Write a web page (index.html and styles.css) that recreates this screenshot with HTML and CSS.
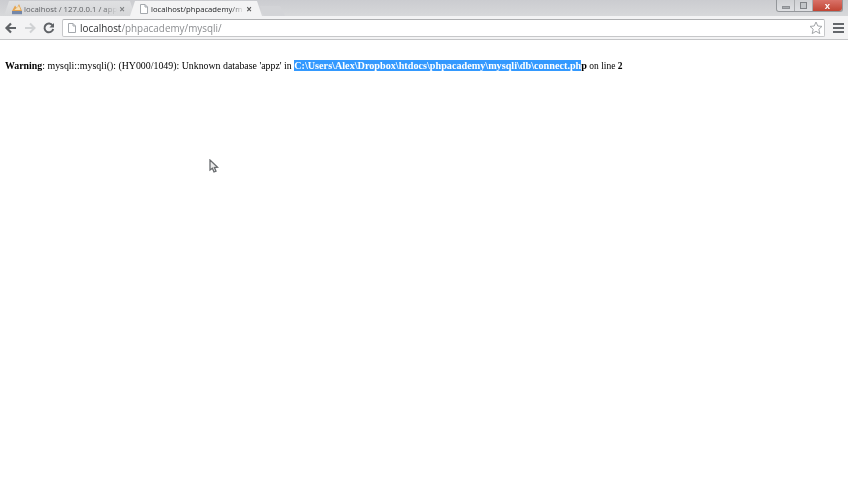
FILE: index.html
```html
<!DOCTYPE html>
<html lang="en">
<head>
<meta charset="utf-8">
<title>localhost/phpacademy/mysqli/</title>
<link rel="stylesheet" href="styles.css">
</head>
<body>
<header class="chrome">
  <div class="tabstrip">
    <div class="tab tab-back">
      <svg class="favicon" viewBox="0 0 12 12" width="12" height="12"><path d="M1 8 L4 2.5 L6 5 L8 1 L11 8 Z" fill="#e6a550"/><path d="M3.4 7 L5.6 5 L8 3 L9.6 7 Z" fill="#f5e0b8"/><rect x="1" y="8" width="10" height="3.2" fill="#7487a8"/></svg>
      <span class="tab-title">localhost / 127.0.0.1 / app</span>
      <span class="tab-close">×</span>
    </div>
    <div class="tab tab-front">
      <svg class="page-icon" viewBox="0 0 8 10" width="8" height="10"><path d="M.5 .5 H5 L7.5 3 V9.5 H.5 Z M5 .5 V3 H7.5" fill="#fff" stroke="#a4a8ad"/></svg>
      <span class="tab-title">localhost/phpacademy/m</span>
      <span class="tab-close">×</span>
    </div>
    <div class="tab-new"></div>
    <div class="window-controls">
      <span class="wc wc-min"><i></i></span>
      <span class="wc wc-max"><i></i></span>
      <span class="wc wc-close">x</span>
    </div>
  </div>
  <div class="toolbar">
    <svg class="nav" viewBox="0 0 14 14" width="14" height="14"><path d="M12 7 H3 M7 2.5 L2.5 7 L7 11.5" fill="none" stroke="#5f6266" stroke-width="2.2"/></svg>
    <svg class="nav" viewBox="0 0 14 14" width="14" height="14"><path d="M2 7 H11 M7 2.5 L11.5 7 L7 11.5" fill="none" stroke="#d0d2d4" stroke-width="2"/></svg>
    <svg class="nav" viewBox="0 0 14 14" width="14" height="14"><path d="M10.6 4.5 A4.4 4.4 0 1 0 11.2 8" fill="none" stroke="#5f6266" stroke-width="2"/><path d="M12 2 V6.6 H7.4 Z" fill="#5f6266"/></svg>
    <div class="omnibox">
      <svg class="page-icon" viewBox="0 0 8 10" width="8" height="10"><path d="M.5 .5 H5 L7.5 3 V9.5 H.5 Z M5 .5 V3 H7.5" fill="#fff" stroke="#a4a8ad"/></svg>
      <span class="url"><span class="host">localhost</span>/phpacademy/mysqli/</span>
      <svg class="star" viewBox="0 0 14 14" width="14" height="14"><path d="M7 1 L8.8 5 L13 5.4 L9.8 8.2 L10.8 12.6 L7 10.3 L3.2 12.6 L4.2 8.2 L1 5.4 L5.2 5 Z" fill="#fff" stroke="#a3a6a9"/></svg>
    </div>
    <div class="menu"><i></i><i></i><i></i></div>
  </div>
</header>
<main class="page">
  <p class="warning"><b>Warning</b>: mysqli::mysqli(): (HY000/1049): Unknown database 'appz' in <b class="path"><span class="selected">C:\Users\Alex\Dropbox\htdocs\phpacademy\mysqli\db\connect.ph</span>p</b><span class="tail"> on line <b>2</b></span></p>
  <svg class="cursor" viewBox="0 0 10 15" width="10" height="15"><path d="M1 1 L1 11 L3.4 9.2 L5 13 L7 12.2 L5.4 8.6 L8.6 8.2 Z" fill="#ececec" stroke="#6a6d70" stroke-width="1.3"/></svg>
</main>
</body>
</html>
```
FILE: styles.css
```css
* { box-sizing: border-box; }
html, body { margin: 0; height: 100%; background: #fff; overflow: hidden; }
body { font-family: "Open Sans", "Liberation Sans", Arial, sans-serif; }

.chrome { height: 40px; background: #f3f3f4; border-bottom: 1px solid #c4c5c7; filter: blur(.25px); }

.tabstrip {
  height: 16px;
  display: flex;
  align-items: flex-end;
  background: linear-gradient(#cbccd0, #d7d8da);
  padding-left: 4px;
  position: relative;
}
.tab {
  height: 15px;
  display: flex;
  align-items: center;
  clip-path: polygon(0 100%, 5px 0, calc(100% - 5px) 0, 100% 100%);
}
.tab-back { width: 131px; padding: 0 10px 0 7px; background: linear-gradient(#dfe0e2, #d6d7d9); color: #5f6164; font-size: 7.8px; }
.tab-front { width: 132px; margin-left: -5px; padding: 0 10px 0 10px; background: #f3f3f4; color: #232527; font-size: 7.7px; z-index: 1; }
.tab-title {
  flex: 1;
  margin-left: 1px;
  overflow: hidden;
  white-space: nowrap;
  -webkit-mask-image: linear-gradient(90deg, #000 85%, transparent 100%);
  mask-image: linear-gradient(90deg, #000 85%, transparent 100%);
}
.tab-front .tab-title { margin-left: 3px; }
.tab-close { width: 6px; font-size: 10px; font-weight: 700; color: #7e8083; line-height: 1; text-align: center; margin-left: 2px; }
.tab-front .tab-close { color: #555; }
.tab-new {
  width: 25px; height: 10px; margin-left: -2px;
  background: #d3d4d7;
  clip-path: polygon(0 0, 20px 0, 100% 100%, 4px 100%);
}
.window-controls {
  position: absolute; top: 0; right: 5px; height: 12px;
  display: flex; border: 1px solid #94979b; border-top: 0; border-radius: 0 0 3px 3px;
}
.wc { display: flex; align-items: center; justify-content: center; height: 11px; }
.wc-min, .wc-max { width: 18px; background: linear-gradient(#cfd1d4, #dfe0e3); border-right: 1px solid #a9abae; }
.wc-min { border-radius: 0 0 0 3px; }
.wc-min i { width: 8px; height: 3px; margin-top: 4px; background: #a9acb0; border: 1px solid #8e9195; }
.wc-max i { width: 7px; height: 7px; border: 1px solid #7f8286; background: #c3c6c9; }
.wc-close { width: 29px; background: linear-gradient(#d97268, #c14433); border-radius: 0 0 3px 0; color: #fff; font-family: "Liberation Sans", Arial, sans-serif; font-size: 9.5px; font-weight: 700; line-height: 11px; }

.toolbar {
  height: 23px;
  display: flex;
  align-items: center;
  padding: 0 4px 0 4px;
  gap: 5px;
}
.nav { flex: none; }
.omnibox {
  flex: 1;
  height: 18px;
  margin-left: 1px;
  display: flex;
  align-items: center;
  gap: 4px;
  padding: 0 1px 0 5px;
  background: #fff;
  border: 1px solid #c6c7c9;
  border-top-color: #aeafb1;
  border-radius: 2px;
}
.url { flex: 1; font-size: 9.9px; color: #8b8d90; white-space: nowrap; }
.host { color: #2f3133; }
.menu { width: 11px; margin-left: 3px; display: flex; flex-direction: column; gap: 2px; }
.menu i { display: block; height: 2px; background: #64676b; }

.page { position: relative; height: 440px; padding: 20px 5px 0 5px; background: #fff; }
.warning { margin: 0; font-family: "Liberation Serif", "Times New Roman", serif; font-size: 9.87px; line-height: 12px; color: #000; white-space: nowrap; filter: blur(.25px); }
.path { font-size: 10.2px; }
.tail { font-size: 9.5px; }
.selected { background: #3399ff; color: #fff; }
.cursor { position: absolute; left: 209px; top: 119px; filter: blur(.3px); }
```
